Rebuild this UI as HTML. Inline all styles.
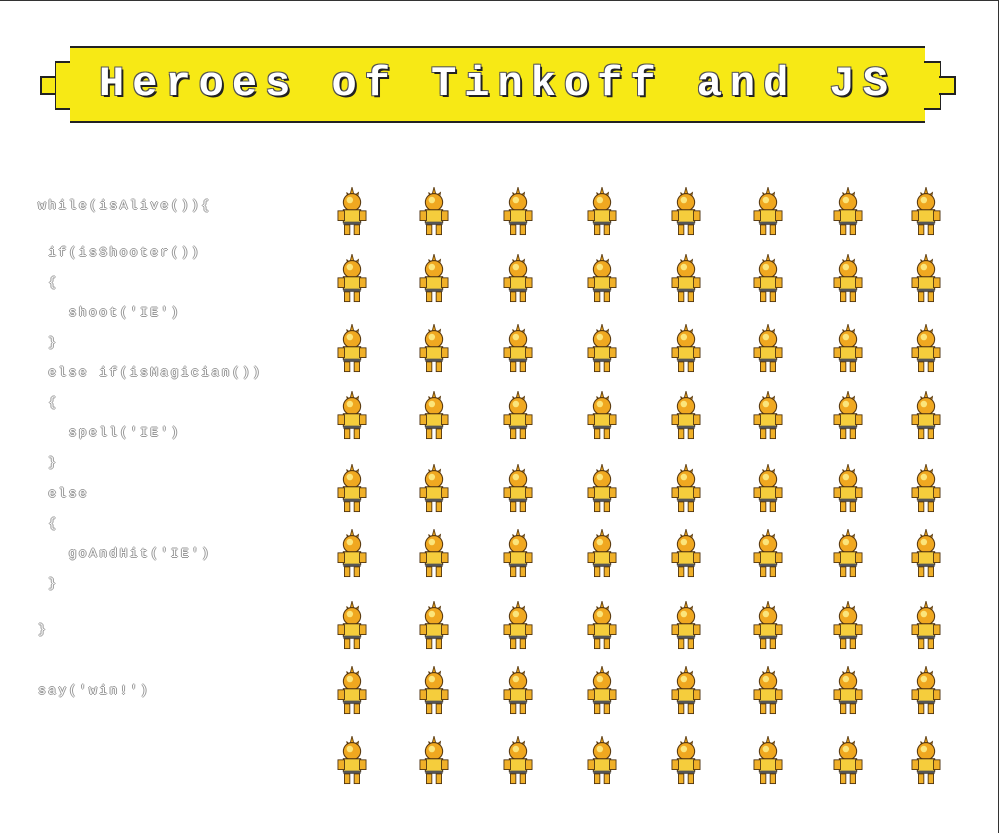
<!DOCTYPE html>
<html><head><meta charset="utf-8"><style>
html,body{margin:0;padding:0;background:#fff;}
body{width:1000px;height:834px;position:relative;overflow:hidden;font-family:"Liberation Mono",monospace;}
.frame{position:absolute;left:0;top:0;width:998px;height:832px;border-top:1px solid #333;border-right:1px solid #333;}
.y{position:absolute;background:#f7e915;border-top:2px solid #222;border-bottom:2px solid #222;}
.title{position:absolute;left:70px;top:60px;width:855px;text-align:center;font:bold 42px "Liberation Mono",monospace;letter-spacing:8px;color:#fff;
text-shadow:2px 2px 0 #222,-1px -1px 0 #555,1px -1px 0 #555,-1px 1px 0 #555;}
.code{position:absolute;left:38px;font:13px "Liberation Mono",monospace;color:#fff;letter-spacing:2.4px;
text-shadow:1px 0 0 #999,-1px 0 0 #999,0 1px 0 #999,0 -1px 0 #999;white-space:pre;}
svg.s{position:absolute;width:38px;height:54px;}
</style></head><body>
<div class="frame"></div>
<div class="y" style="left:40px;top:76px;width:16px;height:15px;border-left:2px solid #222"></div>
<div class="y" style="left:55px;top:61px;width:16px;height:45px;border-left:1px solid #222"></div>
<div class="y" style="left:70px;top:46px;width:855px;height:73px;"></div>
<div class="y" style="left:924px;top:61px;width:16px;height:45px;border-right:1px solid #222"></div>
<div class="y" style="left:939px;top:76px;width:15px;height:15px;border-right:2px solid #222"></div>
<div class="title">Heroes of Tinkoff and JS</div>

<div class="code" style="top:198px">while(isAlive()){</div>
<div class="code" style="top:245px"> if(isShooter())</div>
<div class="code" style="top:275px"> {</div>
<div class="code" style="top:305px">   shoot('IE')</div>
<div class="code" style="top:335px"> }</div>
<div class="code" style="top:365px"> else if(isMagician())</div>
<div class="code" style="top:395px"> {</div>
<div class="code" style="top:425px">   spell('IE')</div>
<div class="code" style="top:455px"> }</div>
<div class="code" style="top:486px"> else</div>
<div class="code" style="top:516px"> {</div>
<div class="code" style="top:546px">   goAndHit('IE')</div>
<div class="code" style="top:576px"> }</div>
<div class="code" style="top:622px">}</div>
<div class="code" style="top:683px">say('win!')</div>

<svg width="0" height="0" style="position:absolute"><defs>
<symbol id="h" viewBox="0 0 34 50">
<path d="M17 1 L19 9 L23 6 L22 12 L14 12 L12 6 L15 9Z" fill="#e9a21a" stroke="#5a3a10" stroke-width="0.8"/>
<circle cx="17" cy="15" r="8" fill="#f0a820" stroke="#5a3a10" stroke-width="1"/>
<circle cx="15" cy="13" r="3" fill="#fbe57a"/>
<rect x="9" y="22" width="16" height="12" fill="#f5cd3c" stroke="#4a3010" stroke-width="1"/>
<rect x="4" y="23" width="6" height="9" fill="#f0b028" stroke="#4a3010" stroke-width="0.8"/>
<rect x="24" y="23" width="6" height="9" fill="#f0b028" stroke="#4a3010" stroke-width="0.8"/>
<rect x="9" y="33" width="16" height="3" fill="#555"/>
<rect x="10" y="36" width="5" height="9" fill="#f0b028" stroke="#4a3010" stroke-width="0.8"/>
<rect x="19" y="36" width="5" height="9" fill="#f0b028" stroke="#4a3010" stroke-width="0.8"/>
</symbol></defs></svg>

<div id="g"></div>
<script>
var xs=[352,434,518,602,686,768,848,926],ys=[213,280,350,417,490,555,627,692,762],h='';
ys.forEach(function(y){xs.forEach(function(x){h+='<svg class="s" style="left:'+(x-19)+'px;top:'+(y-27)+'px"><use href="#h"/></svg>';});});
document.getElementById('g').innerHTML=h;
</script>
</body></html>
